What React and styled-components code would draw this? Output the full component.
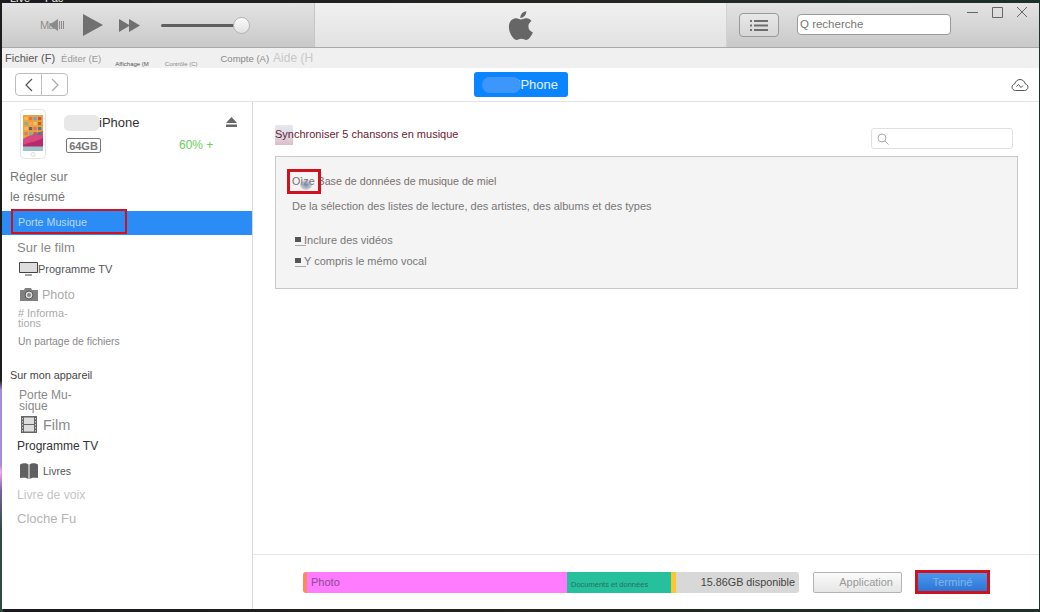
import React from "react";
import styled, { createGlobalStyle } from "styled-components";

const Global = createGlobalStyle`
  html, body {
    margin: 0;
    height: 612px;
    overflow: hidden;
    background: #14201c;
    font-family: "Liberation Sans", Arial, sans-serif;
  }
`;

const Desktop = styled.div`
  position: relative;
  width: 1040px;
  height: 612px;
  padding: 3px 1px 3px 2px;
  box-sizing: border-box;
  overflow: hidden;
  background:
    linear-gradient(#1a1d1c 0, #1a1d1c 380px, #a58bd8 390px, #a58bd8 465px, #f0a8ee 472px, #7c63a8 490px, #2f4a3f 530px, #2f4a3f 100%) left / 3px 100% no-repeat,
    linear-gradient(90deg, #1a1a1e 0, #262420 50%, #1d3029 100%);
`;

const BackdropText = styled.span`
  position: absolute;
  left: ${(p) => p.$x}px;
  top: -8px;
  color: #eee;
  font-size: 11px;
`;

const Window = styled.div`
  position: relative;
  height: 606px;
  display: flex;
  flex-direction: column;
  background: #fff;
`;

const TitleBar = styled.div`
  height: 44px;
  display: flex;
  flex: none;
  border-bottom: 1px solid #a9a9a9;
  background: linear-gradient(#e3e3e3, #c9c9c9);
`;

const Transport = styled.div`
  width: 313px;
  flex: none;
  display: flex;
  align-items: center;
  border-right: 1px solid #c6c6c6;
  padding-left: 38px;
  box-sizing: border-box;
`;

const MuteBox = styled.div`
  position: relative;
  width: 28px;
  height: 20px;
  display: flex;
  align-items: center;
  color: #8f8f8f;
  font-size: 11px;
  letter-spacing: -1px;
`;

const MuteIcon = styled.svg`
  position: absolute;
  left: 9px;
  top: 3px;
`;

const Slider = styled.div`
  position: relative;
  width: 81px;
  height: 3px;
  border-radius: 2px;
  background: #5f5f5f;
  margin-left: 21px;
`;

const Knob = styled.div`
  position: absolute;
  right: -8px;
  top: -7px;
  width: 15px;
  height: 15px;
  border-radius: 50%;
  border: 1px solid #b4b4b4;
  background: linear-gradient(#fafafa, #e2e2e2);
`;

const Brand = styled.div`
  flex: 1;
  display: flex;
  align-items: center;
  justify-content: center;
  background: linear-gradient(#f0f0f0, #e2e2e2);
`;

const TitleRight = styled.div`
  position: relative;
  width: 313px;
  flex: none;
  display: flex;
  align-items: flex-start;
  border-left: 1px solid #d2d2d2;
  box-sizing: border-box;
  padding: 10px 0 0 12px;
`;

const ListButton = styled.button`
  width: 40px;
  height: 24px;
  padding: 0;
  display: flex;
  align-items: center;
  justify-content: center;
  border: 1px solid #9a9a9a;
  border-radius: 4px;
  background: linear-gradient(#e8e8e8, #d6d6d6);
`;

const Search = styled.div`
  width: 154px;
  height: 21px;
  margin: 1px 0 0 18px;
  padding-left: 2px;
  box-sizing: border-box;
  border: 1px solid #999;
  border-radius: 4px;
  background: #fff;
  color: #767676;
  font-size: 11.5px;
  line-height: 19px;
`;

const WinControls = styled.svg`
  position: absolute;
  top: 0;
  right: 0;
`;

const MenuBar = styled.div`
  height: 20px;
  flex: none;
  display: flex;
  align-items: center;
  background: #f0f0f0;
  padding-left: 3px;
`;

const MenuItem = styled.span`
  color: ${(p) => p.$color || "#666"};
  font-size: ${(p) => p.$size || 10}px;
  margin-left: ${(p) => p.$gap || 0}px;
  margin-top: ${(p) => p.$drop || 0}px;
  white-space: nowrap;
`;

const NavRow = styled.div`
  position: relative;
  height: 33px;
  flex: none;
  display: flex;
  align-items: center;
  justify-content: space-between;
  padding: 0 10px 0 13px;
  border-bottom: 1px solid #e2e2e2;
`;

const NavGroup = styled.div`
  display: flex;
`;

const NavButton = styled.button`
  width: 27px;
  height: 23px;
  padding: 0;
  display: flex;
  align-items: center;
  justify-content: center;
  background: #fff;
  border: 1px solid #bdbdbd;
  border-radius: ${(p) => (p.$left ? "4px 0 0 4px" : "0 4px 4px 0")};
  margin-left: ${(p) => (p.$left ? 0 : "-1px")};
`;

const DeviceTab = styled.div`
  position: absolute;
  left: 472px;
  top: 4px;
  width: 94px;
  height: 25px;
  display: flex;
  align-items: center;
  justify-content: flex-end;
  padding-right: 10px;
  box-sizing: border-box;
  border-radius: 3px;
  background: #0a84ff;
  color: #e6f3ff;
  font-size: 13px;
`;

const TabBlur = styled.span`
  position: absolute;
  left: 8px;
  top: 5px;
  width: 39px;
  height: 16px;
  border-radius: 8px;
  background: #3d96fb;
`;

const Main = styled.div`
  flex: 1;
  min-height: 0;
  display: flex;
`;

const Sidebar = styled.aside`
  width: 250px;
  flex: none;
  border-right: 1px solid #d9d9d9;
`;

const DeviceCard = styled.div`
  position: relative;
  height: 58px;
  padding: 7px 0 0 18px;
  display: flex;
`;

const DeviceInfo = styled.div`
  margin-left: 18px;
  padding-top: 6px;
`;

const DeviceName = styled.div`
  display: flex;
  align-items: center;
  color: #333;
  font-size: 13px;
  line-height: 16px;
`;

const NameBlur = styled.span`
  width: 35px;
  height: 16px;
  border-radius: 5px;
  background: #e8e8e8;
`;

const Capacity = styled.div`
  width: 35px;
  height: 15px;
  margin: 7px 0 0 2px;
  box-sizing: border-box;
  border: 1px solid #777;
  border-radius: 2px;
  color: #777;
  font-size: 11px;
  font-weight: 700;
  line-height: 14px;
  text-align: center;
`;

const Eject = styled.svg`
  position: absolute;
  left: 224px;
  top: 15px;
`;

const Battery = styled.span`
  position: absolute;
  left: 177px;
  top: 36px;
  color: #6bcf5c;
  font-size: 12px;
`;

const Heading = styled.div`
  padding-left: 8px;
  color: #777;
  font-size: 12.5px;
  line-height: 20px;
`;

const ActiveRow = styled.div`
  position: relative;
  height: 24px;
  margin-top: 4px;
  padding-left: 16px;
  background: #2b8cf5;
  color: #b9d8f8;
  font-size: 10.7px;
  line-height: 22px;
`;

const Highlight = styled.span`
  position: absolute;
  left: ${(p) => p.$x}px;
  top: ${(p) => p.$y}px;
  width: ${(p) => p.$w}px;
  height: ${(p) => p.$h}px;
  box-sizing: border-box;
  border: ${(p) => p.$b || 2}px solid #d0121f;
`;

const Smudge = styled.span`
  position: absolute;
  left: 10px;
  top: 8px;
  width: 12px;
  height: 10px;
  border-radius: 50%;
  background: radial-gradient(#7d8ca8, rgba(125, 140, 168, 0));
`;

const SideRow = styled.div`
  display: flex;
  align-items: center;
  height: ${(p) => p.$h}px;
  padding-left: ${(p) => p.$x ?? 15}px;
  color: ${(p) => p.$color || "#777"};
  font-size: ${(p) => p.$size || 12}px;
  line-height: ${(p) => p.$lh || "normal"};
`;

const RowLabel = styled.span`
  margin-left: ${(p) => p.$gap ?? 5}px;
`;

const SectionTitle = styled.div`
  margin-top: 11px;
  height: 16px;
  padding-left: 8px;
  color: #444;
  font-size: 10.8px;
  line-height: 16px;
`;

const Content = styled.section`
  flex: 1;
  min-width: 0;
  display: flex;
  flex-direction: column;
`;

const SyncArea = styled.div`
  flex: 1;
  padding: 25px 21px 0 22px;
`;

const SyncHeader = styled.div`
  position: relative;
  isolation: isolate;
  height: 29px;
  display: flex;
  justify-content: space-between;
`;

const SyncTitle = styled.div`
  margin-top: 1px;
  color: #6b2230;
  font-size: 11px;
  line-height: 13px;
`;

const AlbumThumb = styled.span`
  position: absolute;
  left: 0;
  top: -2px;
  width: 18px;
  height: 20px;
  background: linear-gradient(#e6e8f2, #d8d7e2 60%, #e0bcc4);
  z-index: -1;
`;

const FilterBox = styled.div`
  width: 142px;
  height: 21px;
  margin: 1px 5px 0 0;
  box-sizing: border-box;
  border: 1px solid #e0e0e0;
  border-radius: 3px;
  display: flex;
  align-items: center;
  padding-left: 5px;
`;

const OptionsPanel = styled.div`
  position: relative;
  height: 133px;
  padding: 18px 16px 0;
  box-sizing: border-box;
  border: 1px solid #c9c9c9;
  background: #f4f4f4;
  color: #777;
  font-size: 11px;
`;

const OptionLine = styled.div`
  height: 13px;
  line-height: 13px;
  margin-bottom: ${(p) => p.$after}px;
  color: ${(p) => p.$color || "#777"};
  font-size: ${(p) => p.$size || 11}px;
`;

const CheckRow = styled.div`
  display: flex;
  align-items: center;
  height: 13px;
  margin-bottom: 8px;
  margin-left: 3px;
`;

const Tick = styled.span`
  position: relative;
  width: 6px;
  height: 5px;
  margin-right: 3px;
  background: #555;

  &::after {
    content: "";
    position: absolute;
    left: 0;
    top: 8px;
    width: 11px;
    height: 1px;
    background: #a8a8a8;
  }
`;

const Footer = styled.footer`
  height: 54px;
  flex: none;
  display: flex;
  align-items: center;
  padding-left: 50px;
  border-top: 1px solid #e6e6e6;
`;

const Storage = styled.div`
  width: 496px;
  height: 21px;
  display: flex;
  border-radius: 3px;
  overflow: hidden;
  font-size: 11px;
  line-height: 21px;
`;

const Segment = styled.div`
  width: ${(p) => p.$w}px;
  flex: ${(p) => (p.$w ? "none" : 1)};
  box-sizing: border-box;
  background: ${(p) => p.$bg};
  color: ${(p) => p.$color || "#555"};
  font-size: ${(p) => p.$size || 11}px;
  padding-left: ${(p) => p.$pad || 0}px;
  padding-right: ${(p) => p.$padRight || 0}px;
  padding-top: ${(p) => p.$drop || 0}px;
  text-align: ${(p) => p.$align || "left"};
  white-space: nowrap;
  overflow: hidden;
`;

const AppButton = styled.button`
  width: 89px;
  height: 21px;
  margin-left: 14px;
  padding: 0 8px 0 0;
  box-sizing: border-box;
  border: 1px solid #b4b4b4;
  border-radius: 2px;
  background: linear-gradient(#fbfbfb, #e6e6e6);
  color: #9a9a9a;
  font: 11px "Liberation Sans", Arial, sans-serif;
  text-align: right;
`;

const DoneButton = styled.button`
  width: 75px;
  height: 24px;
  margin-left: 13px;
  padding: 0;
  box-sizing: border-box;
  border: 3px solid #d0121f;
  background: linear-gradient(#4d97ec, #2b76d6);
  color: #83b4ec;
  font: 11.3px "Liberation Sans", Arial, sans-serif;
`;

const appColors = [
  "#f2c14e", "#e76f51", "#5fa8d3", "#d1495b",
  "#8ab17d", "#f4a261", "#e9c46a", "#b5651d",
  "#f6bd60", "#6d597a", "#e56b6f", "#457b9d",
  "#e07a5f", "#81b29a", "#a26769", "#577590",
];

const PhoneIcon = () => (
  <svg width="26" height="50" viewBox="0 0 26 50">
    <rect x=".5" y=".5" width="25" height="49" rx="4" fill="#fff" stroke="#e4e4e4" />
    <rect x="3" y="6" width="20" height="36" fill="#e9a33f" />
    <path d="M3 30c6-4 14-6 20-8v20H3z" fill="#d8497f" />
    <path d="M3 36c7-3 13-3 20-7v13H3z" fill="#b62a6a" />
    {appColors.map((c, i) => (
      <rect key={i} x={4.5 + (i % 4) * 4.5} y={8 + Math.floor(i / 4) * 5} width="3.200" height="3.200" fill={c} />
    ))}
    <rect x="3" y="37.500" width="20" height="4.500" fill="#9cc3c9" />
    <circle cx="13" cy="45.500" r="2" fill="none" stroke="#ddd" />
  </svg>
);

export default function App() {
  return (
    <>
      <Global />
      <Desktop>
        <BackdropText $x={10}>Live</BackdropText>
        <BackdropText $x={45}>Fac</BackdropText>
        <Window>
          <TitleBar>
            <Transport>
              <MuteBox>
                Ma
                <MuteIcon width="15" height="14" viewBox="0 0 15 14">
                  <path d="M0 7l9-6v12z" fill="#8a8a8a" />
                  <path d="M10.500 3v8M12.500 3v8M14.500 3v8" stroke="#8a8a8a" />
                </MuteIcon>
              </MuteBox>
              <svg width="20" height="22" viewBox="0 0 20 22" style={{ marginLeft: 15 }}>
                <path d="M0 0l20 11L0 22z" fill="#707070" />
              </svg>
              <svg width="21" height="13" viewBox="0 0 21 13" style={{ marginLeft: 16 }}>
                <path d="M0 0l11 6.500L0 13zM10 0l11 6.500L10 13z" fill="#707070" />
              </svg>
              <Slider>
                <Knob />
              </Slider>
            </Transport>
            <Brand>
              <svg width="26" height="31" viewBox="0 1.500 22 25">
                <path
                  fill="#666"
                  d="M17.300 14.800c0-3 2.500-4.500 2.600-4.600-1.400-2.100-3.600-2.400-4.400-2.400-1.900-.2-3.700 1.100-4.600 1.100-1 0-2.400-1.100-4-1.100C4.800 7.900 2.900 9 1.800 10.800c-2.200 3.700-.6 9.300 1.500 12.300 1.100 1.500 2.300 3.200 4 3.100 1.600-.1 2.200-1 4.100-1s2.500 1 4.100 1c1.700 0 2.800-1.500 3.800-3 1.200-1.700 1.700-3.400 1.700-3.500-.1 0-3.700-1.400-3.700-4.900zM14.200 5.800c.9-1 1.400-2.500 1.300-3.900-1.300.1-2.800.8-3.700 1.900-.8.900-1.500 2.400-1.300 3.800 1.400.1 2.800-.7 3.700-1.800z"
                />
              </svg>
            </Brand>
            <TitleRight>
              <ListButton aria-label="Liste">
                <svg width="18" height="11" viewBox="0 0 18 11">
                  <path
                    d="M0 0h2v2H0zM4 0h14v2H4zM0 4.500h2v2H0zM4 4.500h14v2H4zM0 9h2v2H0zM4 9h14v2H4z"
                    fill="#6e6e6e"
                  />
                </svg>
              </ListButton>
              <Search>Q recherche</Search>
              <WinControls width="76" height="20" viewBox="0 0 76 20">
                <path d="M4 9.500h11" stroke="#666" fill="none" />
                <path d="M29.500 4.500h10v10h-10z" stroke="#666" fill="none" />
                <path d="M54 4l10 10M64 4L54 14" stroke="#666" fill="none" />
              </WinControls>
            </TitleRight>
          </TitleBar>

          <MenuBar>
            <MenuItem $size={11} $color="#555">Fichier (F)</MenuItem>
            <MenuItem $size={9.5} $color="#999" $gap={6}>Éditer (E)</MenuItem>
            <MenuItem $size={6} $color="#555" $gap={14} $drop={12}>Affichage (M</MenuItem>
            <MenuItem $size={6} $color="#888" $gap={16} $drop={12}>Contrôle (C)</MenuItem>
            <MenuItem $size={9.5} $color="#888" $gap={23}>Compte (A)</MenuItem>
            <MenuItem $size={12} $color="#c8c8c8" $gap={4}>Aide (H</MenuItem>
          </MenuBar>

          <NavRow>
            <NavGroup>
              <NavButton $left aria-label="Précédent">
                <svg width="10" height="14" viewBox="0 0 10 14">
                  <path d="M8 1L2 7l6 6" stroke="#555" strokeWidth="1.200" fill="none" />
                </svg>
              </NavButton>
              <NavButton aria-label="Suivant">
                <svg width="10" height="14" viewBox="0 0 10 14">
                  <path d="M2 1l6 6-6 6" stroke="#aaa" strokeWidth="1.200" fill="none" />
                </svg>
              </NavButton>
            </NavGroup>
            <DeviceTab>
              <TabBlur />
              iPhone
            </DeviceTab>
            <svg width="18" height="14" viewBox="0 0 18 14">
              <path
                d="M4.500 12.500C2.500 12.500 1 11 1 9.200c0-1.600 1.100-2.900 2.700-3.200C4.300 3.400 6.500 1.500 9 1.500c2.600 0 4.700 1.800 5.200 4.300 1.600.3 2.800 1.700 2.800 3.400 0 1.800-1.500 3.300-3.400 3.300z"
                stroke="#555"
                fill="none"
              />
              <path d="M5.500 8.500l2-2 2.500 3 2-2" stroke="#555" fill="none" />
            </svg>
          </NavRow>

          <Main>
            <Sidebar>
              <DeviceCard>
                <PhoneIcon />
                <DeviceInfo>
                  <DeviceName>
                    <NameBlur />
                    iPhone
                  </DeviceName>
                  <Capacity>64GB</Capacity>
                </DeviceInfo>
                <Eject width="11" height="10" viewBox="0 0 11 10">
                  <path d="M5.500 0L11 6H0zM0 7.500h11V10H0z" fill="#666" />
                </Eject>
                <Battery>60% +</Battery>
              </DeviceCard>
              <Heading>Régler sur<br />le résumé</Heading>
              <ActiveRow>
                Porte Musique
                <Highlight $x={9} $y={-2} $w={116} $h={25} />
              </ActiveRow>
              <SideRow $h={24} $size={13} $color="#888">Sur le film</SideRow>
              <SideRow $h={20} $x={17} $size={11} $color="#555">
                <svg width="19" height="14" viewBox="0 0 19 14">
                  <path d="M.5.500h18v10H.5z" fill="#ddd" stroke="#444" />
                  <path d="M6 13h7" stroke="#444" />
                </svg>
                <span>Programme TV</span>
              </SideRow>
              <SideRow $h={31} $x={18} $size={12.5} $color="#aaa">
                <svg width="18" height="13" viewBox="0 0 18 13">
                  <path d="M0 2h4l1-2h6l1 2h6v11H0z" fill="#808080" />
                  <circle cx="9" cy="7" r="4" fill="#ddd" stroke="#555" />
                  <circle cx="9" cy="7" r="2" fill="#888" />
                </svg>
                <RowLabel $gap={4}>Photo</RowLabel>
              </SideRow>
              <SideRow $h={16} $x={16} $size={10.9} $lh="10px" $color="#aaa">
                <RowLabel $gap={0}># Informa-<br />tions</RowLabel>
              </SideRow>
              <SideRow $h={30} $x={16} $size={10.4} $color="#888">Un partage de fichiers</SideRow>
              <SectionTitle>Sur mon appareil</SectionTitle>
              <SideRow $h={35} $x={17} $size={12} $lh="11px" $color="#888">
                <RowLabel $gap={0}>Porte Mu-<br />sique</RowLabel>
              </SideRow>
              <SideRow $h={13} $x={19} $size={14.5} $color="#8a8a8a">
                <svg width="16" height="17" viewBox="0 0 16 17">
                  <path d="M0 0h16v17H0z" fill="#666" />
                  <path d="M3 1.500h10v6.500H3zM3 9h10v6.500H3z" fill="#ddd" />
                  <path d="M1 2h1v1.500H1zM1 5h1v1.500H1zM1 8h1v1.500H1zM1 11h1v1.500H1zM1 14h1v1.500H1zM14 2h1v1.500h-1zM14 5h1v1.500h-1zM14 8h1v1.500h-1zM14 11h1v1.500h-1zM14 14h1v1.500h-1z" fill="#ccc" />
                </svg>
                <RowLabel $gap={6}>Film</RowLabel>
              </SideRow>
              <SideRow $h={30} $size={12} $color="#333">Programme TV</SideRow>
              <SideRow $h={19} $x={18} $size={10.5} $color="#555">
                <svg width="18" height="16" viewBox="0 0 18 16">
                  <path d="M0 1.500C3-.5 6.500 0 8.500 1.500V16C6.500 14.500 3 14.500 0 15zM18 1.500C15-.5 11.500 0 9.500 1.500V16c2-1.500 5.500-1.500 8.500-1z" fill="#606060" />
                </svg>
                <RowLabel $gap={5}>Livres</RowLabel>
              </SideRow>
              <SideRow $h={29} $size={12.2} $color="#c4c4c4">Livre de voix</SideRow>
              <SideRow $h={19} $size={13} $color="#b4b4b4">Cloche Fu</SideRow>
            </Sidebar>

            <Content>
              <SyncArea>
                <SyncHeader>
                  <AlbumThumb />
                  <SyncTitle>Synchroniser 5 chansons en musique</SyncTitle>
                  <FilterBox>
                    <svg width="12" height="12" viewBox="0 0 12 12">
                      <circle cx="5" cy="5" r="4" stroke="#aaa" fill="none" />
                      <path d="M8 8l3.500 3.500" stroke="#aaa" />
                    </svg>
                  </FilterBox>
                </SyncHeader>
                <OptionsPanel>
                  <OptionLine $after={12} $size={10.7} $color="#7a6e6c">Oìze Base de données de musique de miel</OptionLine>
                  <OptionLine $after={20}>De la sélection des listes de lecture, des artistes, des albums et des types</OptionLine>
                  <CheckRow><Tick />Inclure des vidéos</CheckRow>
                  <CheckRow><Tick />Y compris le mémo vocal</CheckRow>
                  <Highlight $x={11} $y={12} $w={34} $h={25} $b={3}>
                    <Smudge />
                  </Highlight>
                </OptionsPanel>
              </SyncArea>
              <Footer>
                <Storage>
                  <Segment $w={4} $bg="#fb8a5c" />
                  <Segment $w={260} $bg="#ff7bff" $color="#8a4a96" $pad={4}>Photo</Segment>
                  <Segment $w={104} $bg="#26c09c" $color="#2b6f5c" $size={7.5} $pad={4} $drop={2}>Documents et données</Segment>
                  <Segment $w={5} $bg="#ffc72c" />
                  <Segment $bg="#d8d8d8" $color="#444" $size={10.8} $align="right" $padRight={4}>15.86GB disponible</Segment>
                </Storage>
                <AppButton>Application</AppButton>
                <DoneButton>Terminé</DoneButton>
              </Footer>
            </Content>
          </Main>
        </Window>
      </Desktop>
    </>
  );
}
